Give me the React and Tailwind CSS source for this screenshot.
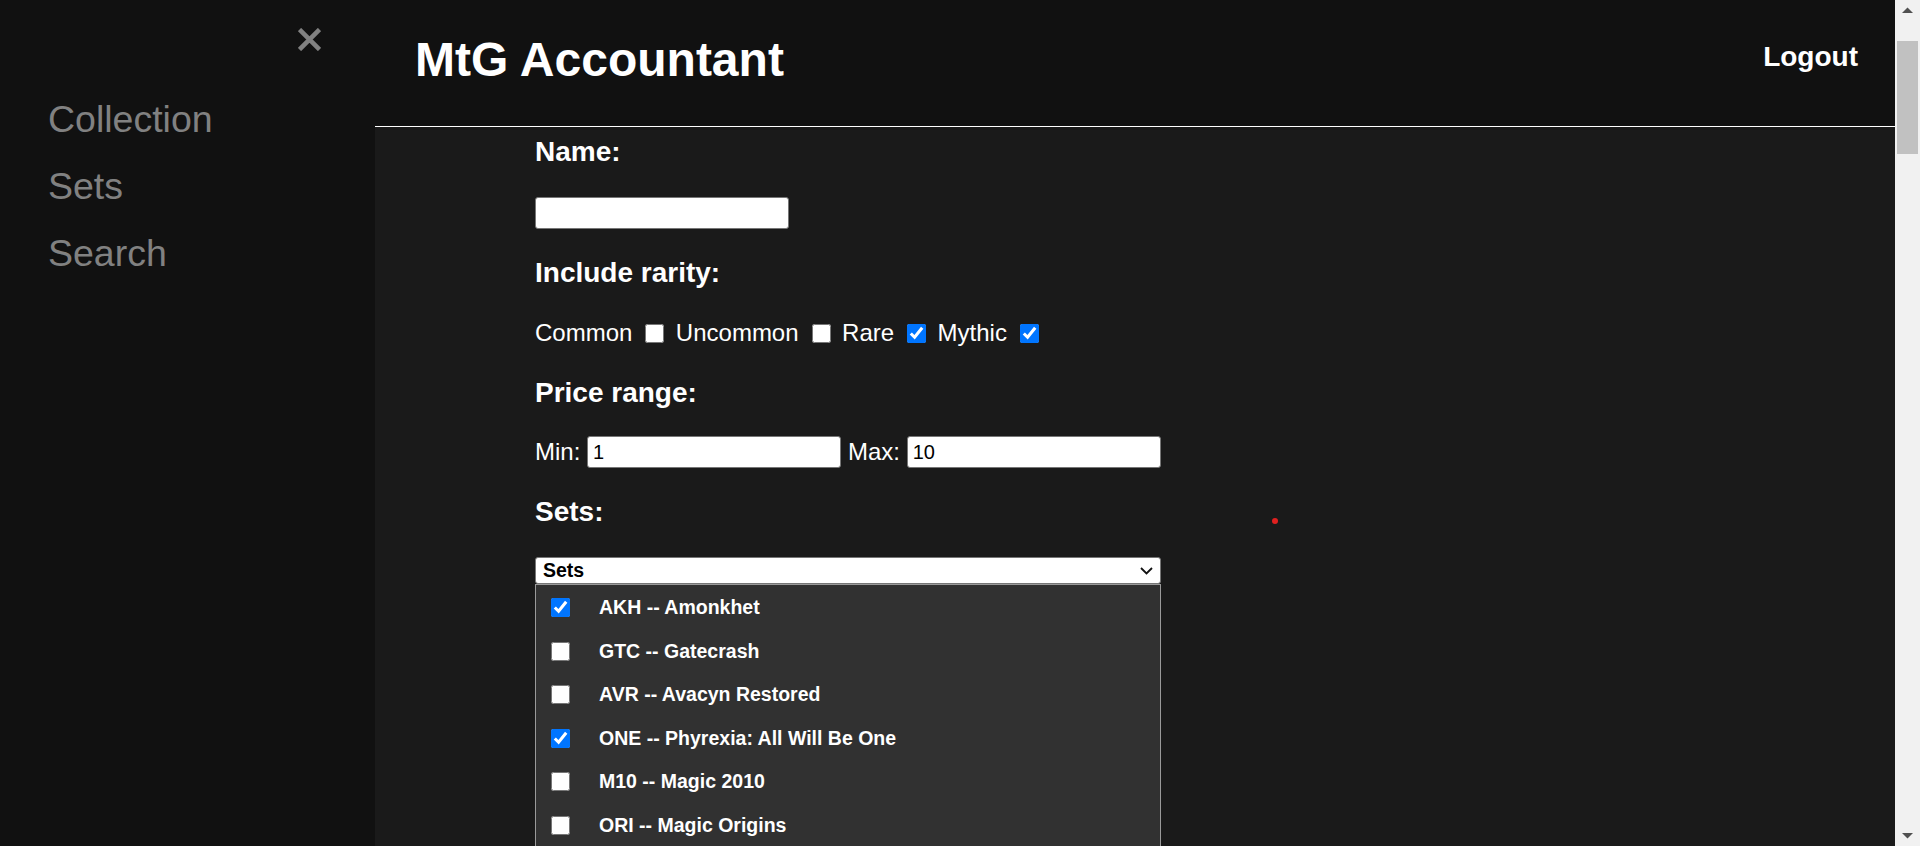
const SETS = [
  { code: 'AKH', name: 'Amonkhet', checked: true },
  { code: 'GTC', name: 'Gatecrash', checked: false },
  { code: 'AVR', name: 'Avacyn Restored', checked: false },
  { code: 'ONE', name: 'Phyrexia: All Will Be One', checked: true },
  { code: 'M10', name: 'Magic 2010', checked: false },
  { code: 'ORI', name: 'Magic Origins', checked: false },
];

const RARITIES = [
  { label: 'Common', checked: false },
  { label: 'Uncommon', checked: false },
  { label: 'Rare', checked: true },
  { label: 'Mythic', checked: true },
];

function Heading({ children, className = '' }) {
  return (
    <h3 className={`text-[28px] font-bold leading-[32px] text-white ${className}`}>
      {children}
    </h3>
  );
}

export default function App() {
  return (
    <div className="flex h-[846px] w-[1920px] overflow-hidden font-['Liberation_Sans',Arial,sans-serif]">
      {/* ── Sidebar ───────────────────────────────────────────── */}
      <aside className="flex w-[375px] flex-shrink-0 flex-col bg-[#111111]">
        <div className="flex justify-end pr-[54px] pt-[28px]">
          <svg width="23" height="23" viewBox="0 0 23 23" className="block">
            <path d="M1.5 1.5 L21.5 21.5 M21.5 1.5 L1.5 21.5" stroke="#818181" strokeWidth="4.6" />
          </svg>
        </div>
        <nav className="flex flex-col pt-[35px]">
          {['Collection', 'Sets', 'Search'].map((item) => (
            <a
              key={item}
              className="block py-[12px] pl-[48px] text-[37.5px] leading-[43px] text-[#818181]"
            >
              {item}
            </a>
          ))}
        </nav>
      </aside>

      {/* ── Page ──────────────────────────────────────────────── */}
      <div className="flex min-w-0 flex-1 flex-col">
        <header className="flex h-[127px] flex-shrink-0 items-start justify-between border-b border-white bg-[#111111] pl-[40px] pr-[37px]">
          <h1 className="pt-[32px] text-[48px] font-bold leading-[55px] text-white">MtG Accountant</h1>
          <a className="mt-[41px] text-[28px] font-bold leading-[32px] text-white">Logout</a>
        </header>

        <main className="relative flex-1 bg-[#1a1a1a]">
          <span className="absolute left-[897px] top-[391px] h-[6px] w-[6px] rounded-full bg-[#e0201f]" />

          <div className="flex w-[786px] flex-col pl-[160px] pt-[9px]">
            <Heading>Name:</Heading>
            <input
              readOnly
              className="mt-[29px] h-[32px] w-[254px] rounded-[3px] border border-[#767676] bg-white px-[5px] text-[20px] text-black"
            />

            <Heading className="mt-[28px]">Include rarity:</Heading>
            <div className="mt-[28px] flex h-[32px] items-center text-[24px] leading-[28px] text-white">
              {RARITIES.map((r) => (
                <div key={r.label} className="flex items-center">
                  <span>{r.label}</span>
                  <input
                    type="checkbox"
                    defaultChecked={r.checked}
                    className="ml-[13px] mr-[11.5px] h-[19px] w-[19px]"
                  />
                </div>
              ))}
            </div>

            <Heading className="mt-[28px]">Price range:</Heading>
            <div className="mt-[27px] flex h-[32px] items-center text-[24px] leading-[28px] text-white">
              <span>Min:</span>
              <input
                readOnly
                defaultValue="1"
                className="ml-[6.7px] h-[32px] w-[254px] rounded-[3px] border border-[#767676] bg-white px-[5px] text-[20px] text-black"
              />
              <span className="ml-[7px]">Max:</span>
              <input
                readOnly
                defaultValue="10"
                className="ml-[6.7px] h-[32px] w-[254px] rounded-[3px] border border-[#767676] bg-white px-[5px] text-[20px] text-black"
              />
            </div>

            <Heading className="mt-[28px]">Sets:</Heading>
            <div className="mt-[29px] flex h-[27px] w-[626px] items-center justify-between rounded-[3px] border border-[#767676] bg-white pl-[7px] pr-[7px]">
              <span className="text-[19.5px] font-bold leading-[23px] text-black">Sets</span>
              <svg width="13" height="8" viewBox="0 0 13 8">
                <path d="M1 1 L6.5 6.5 L12 1" fill="none" stroke="#111" strokeWidth="1.8" />
              </svg>
            </div>
            <div className="w-[626px] border border-[#9a9a9a] bg-[#313131] pt-[1px] pb-[4px]">
              {SETS.map((s) => (
                <label key={s.code} className="flex h-[43.5px] items-center pl-[15px]">
                  <input type="checkbox" defaultChecked={s.checked} className="m-0 h-[19px] w-[19px]" />
                  <span className="ml-[29px] text-[19.5px] font-bold leading-[23px] text-white">
                    {s.code} -- {s.name}
                  </span>
                </label>
              ))}
            </div>
          </div>
        </main>
      </div>

      {/* ── Scrollbar ─────────────────────────────────────────── */}
      <div className="flex w-[25px] flex-shrink-0 flex-col bg-[#f1f1f1]">
        <svg width="25" height="25" viewBox="0 0 25 25" className="block">
          <polygon points="7,13 18,13 12.5,7.5" fill="#505050" />
        </svg>
        <div className="ml-[2px] mt-[16px] h-[113px] w-[21px] bg-[#c1c1c1]" />
        <div className="flex-1" />
        <svg width="25" height="25" viewBox="0 0 25 25" className="block">
          <polygon points="7,12 18,12 12.5,17.5" fill="#505050" />
        </svg>
      </div>
    </div>
  );
}
